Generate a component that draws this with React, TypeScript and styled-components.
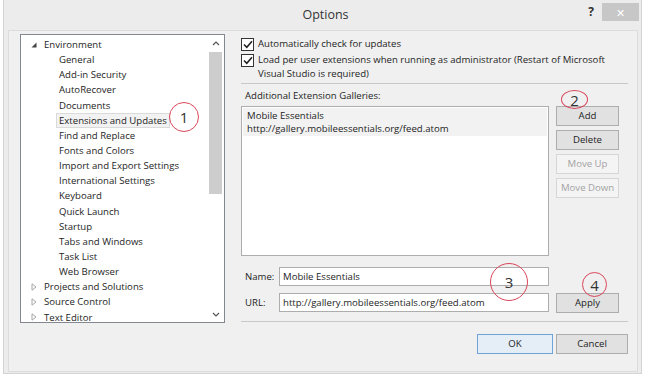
import React from "react";
import styled, { createGlobalStyle, css } from "styled-components";

const Global = createGlobalStyle`
  html, body { margin: 0; padding: 0; background: #ffffff; }
  body { font-family: "Open Sans", "Noto Sans", sans-serif; font-size: 9.6px; color: #1e1e1e; }
  * { box-sizing: border-box; }
`;

const Window = styled.div`
  position: relative;
  width: 639px;
  height: 374px;
  margin-left: 3px;
  background: #ececec;
  border: 1px solid #d4d4d4;
  border-top: none;
  display: flex;
  flex-direction: column;
`;

const TitleBar = styled.div`
  height: 30px;
  display: flex;
  align-items: flex-start;
`;

const Title = styled.div`
  flex: 1;
  text-align: center;
  font-size: 12.5px;
  color: #333;
  padding-top: 6px;
  padding-left: 66px;
`;

const Help = styled.div`
  width: 20px;
  font-size: 12px;
  font-weight: bold;
  color: #333;
  padding-top: 3px;
  text-align: center;
  margin-right: 1px;
`;

const CloseBtn = styled.div`
  width: 37px;
  height: 18px;
  margin-top: 3px;
  margin-right: 2px;
  background: #c7c7c7;
  color: #fff;
  font-size: 11px;
  display: flex;
  align-items: center;
  justify-content: center;
`;

const Content = styled.div`
  flex: 1;
  margin: 0 3px 1px 4px;
  background: #f0f0f0;
  border: 1px solid #dcdcdc;
  display: flex;
  padding: 3px 0 0 11px;
  gap: 16px;
`;

const TreeBox = styled.div`
  width: 205px;
  height: 289px;
  background: #fff;
  border: 1px solid #828790;
  display: flex;
`;

const TreeList = styled.div`
  flex: 1;
  padding-top: 2px;
  overflow: hidden;
`;

const TreeItem = styled.div<{ $level: number }>`
  height: 15.15px;
  line-height: 15px;
  display: flex;
  align-items: center;
  padding-left: ${(p) => (p.$level === 0 ? 9 : 35)}px;
  white-space: nowrap;
`;

const ItemLabel = styled.span<{ $selected?: boolean }>`
  padding: 0 2px;
  line-height: 13px;
  border: 1px solid transparent;
  ${(p) =>
    p.$selected &&
    css`
      background: #f2f2f2;
      border-color: #dadada;
    `}
`;

const Expander = styled.span`
  width: 8px;
  margin-right: 3px;
  display: inline-flex;
  align-items: center;
  justify-content: center;
`;

const ScrollBar = styled.div`
  width: 17px;
  background: #fff;
  display: flex;
  flex-direction: column;
  align-items: center;
`;

const ScrollArrow = styled.div`
  height: 16px;
  width: 17px;
  display: flex;
  align-items: center;
  justify-content: center;
`;

const ScrollTrack = styled.div`
  flex: 1;
  width: 100%;
  padding: 1px 2px;
`;

const ScrollThumb = styled.div`
  width: 13px;
  height: 142px;
  background: #cdcdcd;
`;

const RightPanel = styled.div`
  width: 387px;
  display: flex;
  flex-direction: column;
  padding-top: 3px;
`;

const CheckRow = styled.div`
  display: flex;
  align-items: flex-start;
  gap: 4px;
  line-height: 14.5px;
  margin-bottom: 1px;
`;

const CheckBox = styled.span`
  width: 13px;
  height: 13px;
  margin-top: 1px;
  flex: none;
  border: 1px solid #333;
  background: #fff;
  display: inline-flex;
  align-items: center;
  justify-content: center;
`;

const Separator = styled.div<{ $top: number; $bottom: number }>`
  height: 1px;
  background: #c8c8c8;
  margin-top: ${(p) => p.$top}px;
  margin-bottom: ${(p) => p.$bottom}px;
`;

const SectionLabel = styled.div`
  padding-left: 4px;
  line-height: 14px;
  margin-bottom: 3px;
`;

const GalleryRow = styled.div`
  display: flex;
  gap: 7px;
`;

const GalleryList = styled.div`
  width: 308px;
  height: 150px;
  background: #fff;
  border: 1px solid #adadad;
  padding: 1px;
`;

const GalleryEntry = styled.div`
  background: #f2f2f2;
  padding: 1px 4px;
  line-height: 13px;
`;

const ButtonColumn = styled.div`
  display: flex;
  flex-direction: column;
  gap: 4px;
`;

const Btn = styled.div<{ $disabled?: boolean; $default?: boolean; $w?: number }>`
  width: ${(p) => p.$w ?? 63}px;
  height: 20px;
  display: flex;
  align-items: center;
  justify-content: center;
  border: 1px solid #adadad;
  background: #e1e1e1;
  color: #1e1e1e;
  ${(p) =>
    p.$disabled &&
    css`
      background: #f4f4f4;
      border-color: #d6d6d6;
      color: #a3a3a3;
    `}
  ${(p) =>
    p.$default &&
    css`
      border-color: #6ea4d8;
      background: #e5eef7;
    `}
`;

const FieldsBlock = styled.div`
  margin-top: 11px;
  display: flex;
  flex-direction: column;
  gap: 7px;
`;

const FieldRow = styled.div`
  display: flex;
  align-items: center;
`;

const FieldLabel = styled.div`
  width: 38px;
  padding-left: 4px;
`;

const Input = styled.div`
  width: 270px;
  height: 19px;
  background: #fff;
  border: 1px solid #adadad;
  padding-left: 3px;
  display: flex;
  align-items: center;
  margin-right: 7px;
`;

const FooterRow = styled.div`
  display: flex;
  justify-content: flex-end;
  gap: 3px;
`;

const Annot = styled.div<{ $x: number; $y: number; $w: number; $h: number }>`
  position: absolute;
  left: ${(p) => p.$x}px;
  top: ${(p) => p.$y}px;
  width: ${(p) => p.$w}px;
  height: ${(p) => p.$h}px;
  border: 1px solid #d9465a;
  border-radius: 50%;
  display: flex;
  align-items: center;
  justify-content: center;
  font-size: 15px;
  color: #333;
  pointer-events: none;
`;

const Check = () => (
  <svg width="10" height="9" viewBox="0 0 10 9">
    <path d="M1 4.5 L3.8 7.3 L9 1.2" fill="none" stroke="#222" strokeWidth="1.6" />
  </svg>
);

const Chevron = ({ up }: { up?: boolean }) => (
  <svg width="8" height="5" viewBox="0 0 8 5">
    <path d={up ? "M1 4 L4 1 L7 4" : "M1 1 L4 4 L7 1"} fill="none" stroke="#555" strokeWidth="1.2" />
  </svg>
);

const OpenArrow = () => (
  <svg width="6" height="6" viewBox="0 0 6 6">
    <path d="M5.5 0.5 L5.5 5.5 L0.5 5.5 Z" fill="#444" />
  </svg>
);

const ClosedArrow = () => (
  <svg width="6" height="8" viewBox="0 0 6 8">
    <path d="M1 0.8 L5 4 L1 7.2 Z" fill="none" stroke="#a6a6a6" strokeWidth="1" />
  </svg>
);

const children = [
  "General",
  "Add-in Security",
  "AutoRecover",
  "Documents",
  "Extensions and Updates",
  "Find and Replace",
  "Fonts and Colors",
  "Import and Export Settings",
  "International Settings",
  "Keyboard",
  "Quick Launch",
  "Startup",
  "Tabs and Windows",
  "Task List",
  "Web Browser",
];

export default function App() {
  return (
    <>
      <Global />
      <Window>
        <TitleBar>
          <Title>Options</Title>
          <Help>?</Help>
          <CloseBtn>✕</CloseBtn>
        </TitleBar>
        <Content>
          <TreeBox>
            <TreeList>
              <TreeItem $level={0}>
                <Expander>
                  <OpenArrow />
                </Expander>
                <ItemLabel>Environment</ItemLabel>
              </TreeItem>
              {children.map((c) => (
                <TreeItem key={c} $level={1}>
                  <ItemLabel $selected={c === "Extensions and Updates"}>{c}</ItemLabel>
                </TreeItem>
              ))}
              {["Projects and Solutions", "Source Control", "Text Editor"].map((c) => (
                <TreeItem key={c} $level={0}>
                  <Expander>
                    <ClosedArrow />
                  </Expander>
                  <ItemLabel>{c}</ItemLabel>
                </TreeItem>
              ))}
            </TreeList>
            <ScrollBar>
              <ScrollArrow>
                <Chevron up />
              </ScrollArrow>
              <ScrollTrack>
                <ScrollThumb />
              </ScrollTrack>
              <ScrollArrow>
                <Chevron />
              </ScrollArrow>
            </ScrollBar>
          </TreeBox>
          <RightPanel>
            <CheckRow>
              <CheckBox>
                <Check />
              </CheckBox>
              <span>Automatically check for updates</span>
            </CheckRow>
            <CheckRow>
              <CheckBox>
                <Check />
              </CheckBox>
              <span>
                Load per user extensions when running as administrator (Restart of Microsoft
                <br />
                Visual Studio is required)
              </span>
            </CheckRow>
            <Separator $top={0} $bottom={5} />
            <SectionLabel>Additional Extension Galleries:</SectionLabel>
            <GalleryRow>
              <GalleryList>
                <GalleryEntry>
                  Mobile Essentials
                  <br />
                  http://gallery.mobileessentials.org/feed.atom
                </GalleryEntry>
              </GalleryList>
              <ButtonColumn>
                <Btn>Add</Btn>
                <Btn>Delete</Btn>
                <Btn $disabled>Move Up</Btn>
                <Btn $disabled>Move Down</Btn>
              </ButtonColumn>
            </GalleryRow>
            <FieldsBlock>
              <FieldRow>
                <FieldLabel>Name:</FieldLabel>
                <Input>Mobile Essentials</Input>
              </FieldRow>
              <FieldRow>
                <FieldLabel>URL:</FieldLabel>
                <Input>http://gallery.mobileessentials.org/feed.atom</Input>
                <Btn>Apply</Btn>
              </FieldRow>
            </FieldsBlock>
            <Separator $top={8} $bottom={12} />
            <FooterRow>
              <Btn $default $w={76}>OK</Btn>
              <Btn $w={72}>Cancel</Btn>
            </FooterRow>
          </RightPanel>
        </Content>
        <Annot $x={165} $y={102} $w={30} $h={30}>1</Annot>
        <Annot $x={557} $y={90} $w={27} $h={19}>2</Annot>
        <Annot $x={486} $y={263} $w={38} $h={38}>3</Annot>
        <Annot $x={578} $y={272} $w={25} $h={25}>4</Annot>
      </Window>
    </>
  );
}
